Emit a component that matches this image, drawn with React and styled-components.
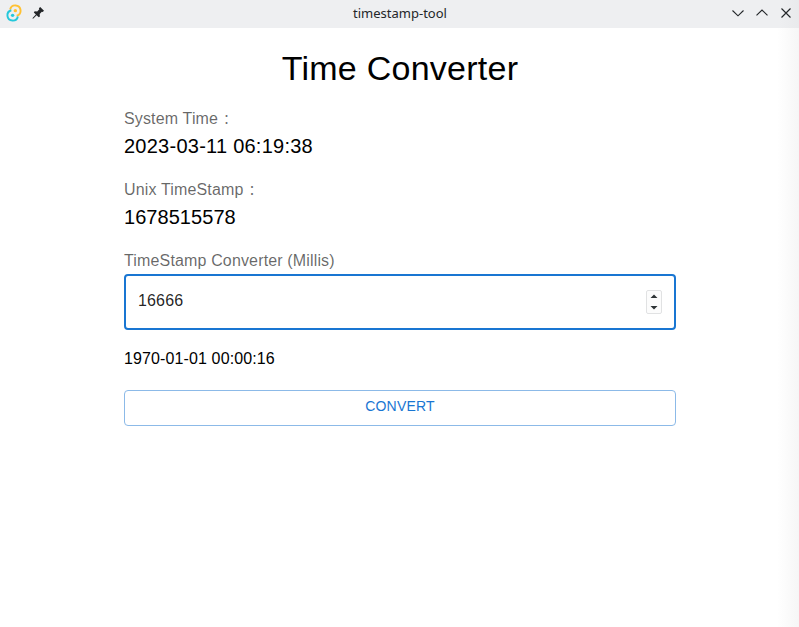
import React, { useState } from "react";
import styled, { createGlobalStyle } from "styled-components";

const GlobalStyle = createGlobalStyle`
  *, *::before, *::after { box-sizing: border-box; }
  body { margin: 0; background: #fff; overflow: hidden; }
`;

const Window = styled.div`
  display: flex;
  flex-direction: column;
  width: 100%;
  height: 100vh;
  font-family: "Liberation Sans", "Noto Sans CJK JP", sans-serif;
  color: #000;
`;

const TitleBar = styled.header`
  display: grid;
  grid-template-columns: 1fr auto 1fr;
  align-items: center;
  flex: none;
  height: 28px;
  padding: 0 5px 2px 6px;
  background: linear-gradient(to right, #eeeff1 calc(100% - 20px), #e9eaec);
`;

const BarGroup = styled.div`
  display: flex;
  align-items: center;
  justify-content: ${(p) => (p.$end ? "flex-end" : "flex-start")};
  gap: 8px;
`;

const WindowTitle = styled.span`
  font: 13px/18px "Noto Sans", sans-serif;
  color: #232629;
`;

const BarIcon = styled.svg`
  display: block;
  width: 16px;
  height: 16px;
  overflow: visible;
`;

const ControlIcon = styled(BarIcon)`
  fill: none;
  stroke: #232629;
  stroke-width: 1.15;
`;

const Content = styled.main`
  flex: 1;
  display: flex;
  justify-content: center;
  background: linear-gradient(to right, #fff calc(100% - 22px), #f6f6f6);
`;

const Form = styled.section`
  display: flex;
  flex-direction: column;
  width: 552px;
  margin-left: 1px;
  padding-top: 19px;
`;

const Heading = styled.h1`
  margin: 0 0 18px;
  font-size: 34px;
  font-weight: 400;
  line-height: 42px;
  letter-spacing: 0.25px;
  text-align: center;
`;

const Field = styled.div`
  display: flex;
  flex-direction: column;
  height: 71px;
`;

const Label = styled.label`
  font-size: 16px;
  line-height: 24px;
  height: 24px;
  letter-spacing: 0.15px;
  color: rgba(0, 0, 0, 0.6);
`;

const Colon = styled.span`
  display: inline-block;
  width: 17px;
  font-size: 13px;
  line-height: 16px;
  text-align: center;
`;

const Value = styled.div`
  font-size: 20px;
  line-height: 30px;
  letter-spacing: ${(p) => p.$spacing || "0.15px"};
`;

const InputBox = styled.div`
  display: flex;
  align-items: center;
  height: 56px;
  margin-top: 1px;
  padding: 0 12px;
  border: 2px solid #1976d2;
  border-radius: 4px;
`;

const Input = styled.input`
  flex: 1;
  min-width: 0;
  height: 24px;
  margin: 0 0 3px;
  padding: 0;
  border: 0;
  outline: 0;
  background: transparent;
  font: inherit;
  font-size: 16px;
  letter-spacing: 0.15px;
  color: rgba(0, 0, 0, 0.87);
`;

const Spinner = styled.svg`
  display: block;
  width: 16px;
  height: 24px;
`;

const Result = styled.output`
  margin-top: 17px;
  font-size: 16px;
  line-height: 24px;
  letter-spacing: 0.12px;
`;

const ConvertButton = styled.button`
  height: 36px;
  margin: 19px 0 0;
  padding: 0 0 4px;
  border: 1px solid #8cbae8;
  border-radius: 4px;
  background: transparent;
  color: #1976d2;
  font: 14px/24px "Liberation Sans", sans-serif;
  letter-spacing: 0.2px;
`;

const AppLogo = () => (
  <BarIcon viewBox="5 8 196 215" fill="none" strokeWidth="26">
    <path d="M51 69A71 71 0 1 1 139 153" stroke="#ffc131" />
    <path d="M155 162A71 71 0 1 1 67 78" stroke="#24c8db" />
    <circle cx="121" cy="84" r="23" fill="#ffc131" />
    <circle cx="84" cy="147" r="23" fill="#24c8db" />
  </BarIcon>
);

const PinIcon = () => (
  <BarIcon viewBox="0 0 16 16" fill="#232629">
    <path d="M10.2 2 14 5.7 12.7 7.1 11.8 6.8 9.7 9 9.9 11.5 8.8 12.3 6.6 10.2 3.4 13.4 2.5 13.7 2.8 12.8 5.9 9.5 3.8 7.4 4.7 6.3 7.2 6.4 9.3 4.3 8.9 3.3Z" />
  </BarIcon>
);

export default function App() {
  const [millis, setMillis] = useState("16666");
  const [result, setResult] = useState("1970-01-01 00:00:16");
  const convert = () => {
    const date = new Date(Number(millis));
    if (!Number.isNaN(date.getTime())) {
      setResult(date.toISOString().slice(0, 19).replace("T", " "));
    }
  };
  return (
    <Window>
      <GlobalStyle />
      <TitleBar>
        <BarGroup>
          <AppLogo />
          <PinIcon />
        </BarGroup>
        <WindowTitle>timestamp-tool</WindowTitle>
        <BarGroup $end>
          <ControlIcon viewBox="0 0 16 16"><path d="m2.5 5.5 5.5 5.3 5.5-5.3" /></ControlIcon>
          <ControlIcon viewBox="0 0 16 16"><path d="m2.5 10.3 5.5-5.3 5.5 5.3" /></ControlIcon>
          <ControlIcon viewBox="0 0 16 16"><path d="m3.5 3.5 9 9m0-9-9 9" /></ControlIcon>
        </BarGroup>
      </TitleBar>
      <Content>
        <Form>
          <Heading>Time Converter</Heading>
          <Field>
            <Label as="span">System Time<Colon>：</Colon></Label>
            <Value $spacing="0.25px">2023-03-11 06:19:38</Value>
          </Field>
          <Field>
            <Label as="span">Unix TimeStamp<Colon>：</Colon></Label>
            <Value $spacing="0.05px">1678515578</Value>
          </Field>
          <Label htmlFor="millis">TimeStamp Converter (Millis)</Label>
          <InputBox>
            <Input
              id="millis"
              inputMode="numeric"
              value={millis}
              onChange={(e) => setMillis(e.target.value)}
            />
            <Spinner viewBox="0 0 16 24">
              <rect x="0.5" y="0.5" width="15" height="23" rx="1.5" fill="#fcfcfc" stroke="#e1e2e3" />
              <path d="M4.5 8 8 4.5 11.5 8ZM4.5 16 8 19.5 11.5 16Z" fill="#2e3436" />
            </Spinner>
          </InputBox>
          <Result>{result}</Result>
          <ConvertButton onClick={convert}>CONVERT</ConvertButton>
        </Form>
      </Content>
    </Window>
  );
}
